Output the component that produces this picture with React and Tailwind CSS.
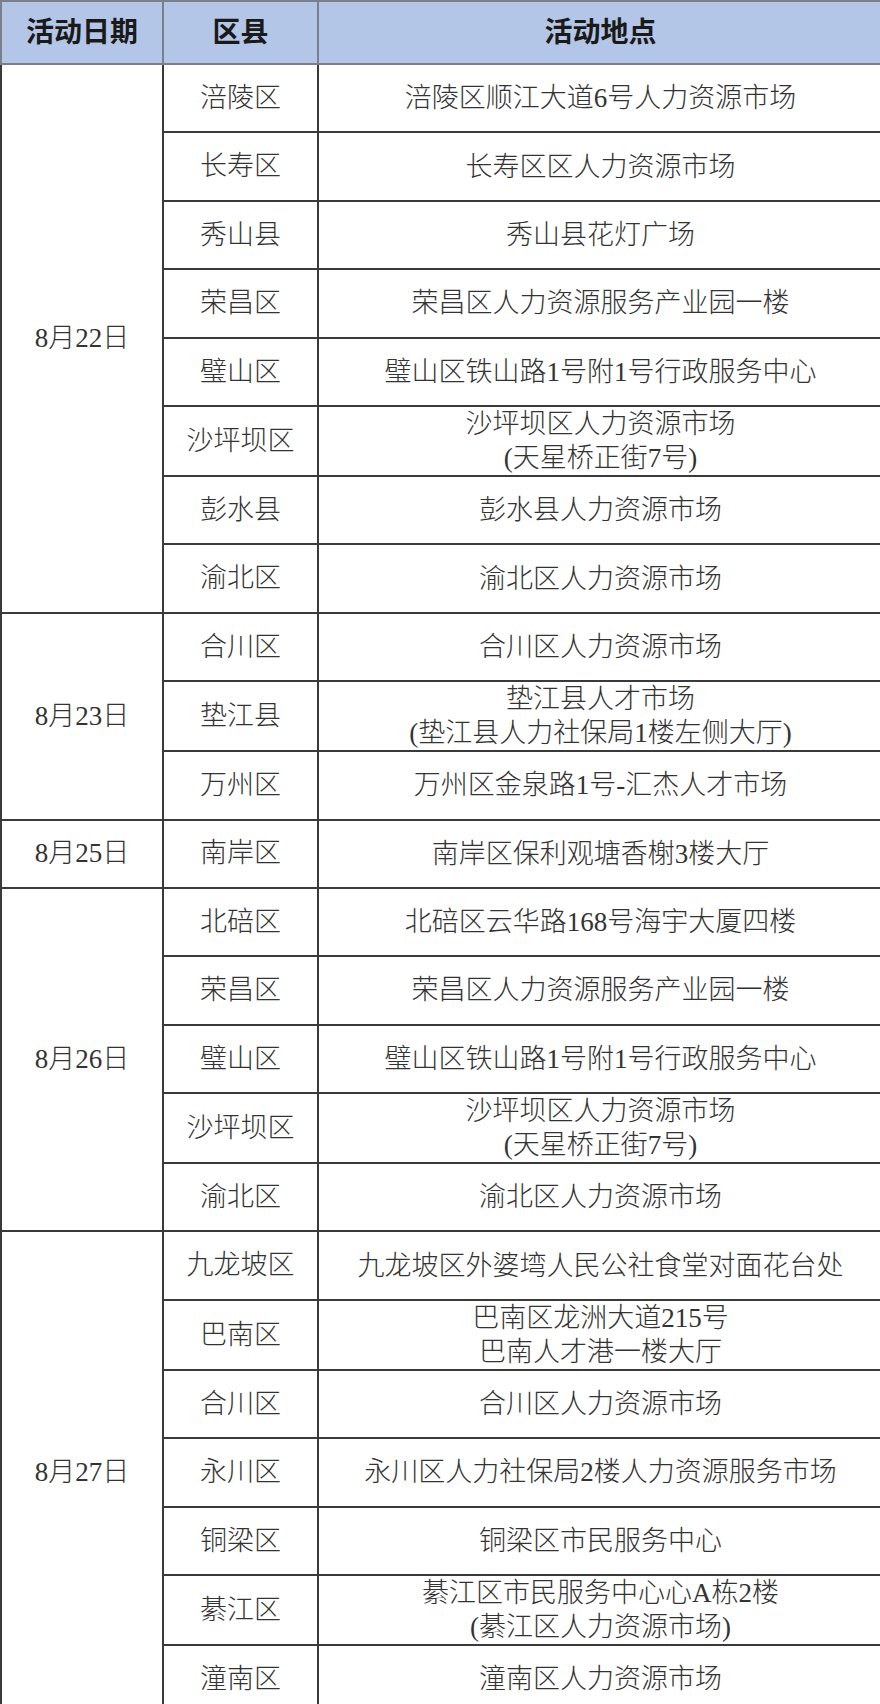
import React from "react";

const groups = [
  {
    date: "8月22日",
    rows: [
      ["涪陵区", ["涪陵区顺江大道6号人力资源市场"]],
      ["长寿区", ["长寿区区人力资源市场"]],
      ["秀山县", ["秀山县花灯广场"]],
      ["荣昌区", ["荣昌区人力资源服务产业园一楼"]],
      ["璧山区", ["璧山区铁山路1号附1号行政服务中心"]],
      ["沙坪坝区", ["沙坪坝区人力资源市场", "(天星桥正街7号)"]],
      ["彭水县", ["彭水县人力资源市场"]],
      ["渝北区", ["渝北区人力资源市场"]],
    ],
  },
  {
    date: "8月23日",
    rows: [
      ["合川区", ["合川区人力资源市场"]],
      ["垫江县", ["垫江县人才市场", "(垫江县人力社保局1楼左侧大厅)"]],
      ["万州区", ["万州区金泉路1号-汇杰人才市场"]],
    ],
  },
  {
    date: "8月25日",
    rows: [["南岸区", ["南岸区保利观塘香榭3楼大厅"]]],
  },
  {
    date: "8月26日",
    rows: [
      ["北碚区", ["北碚区云华路168号海宇大厦四楼"]],
      ["荣昌区", ["荣昌区人力资源服务产业园一楼"]],
      ["璧山区", ["璧山区铁山路1号附1号行政服务中心"]],
      ["沙坪坝区", ["沙坪坝区人力资源市场", "(天星桥正街7号)"]],
      ["渝北区", ["渝北区人力资源市场"]],
    ],
  },
  {
    date: "8月27日",
    rows: [
      ["九龙坡区", ["九龙坡区外婆塆人民公社食堂对面花台处"]],
      ["巴南区", ["巴南区龙洲大道215号", "巴南人才港一楼大厅"]],
      ["合川区", ["合川区人力资源市场"]],
      ["永川区", ["永川区人力社保局2楼人力资源服务市场"]],
      ["铜梁区", ["铜梁区市民服务中心"]],
      ["綦江区", ["綦江区市民服务中心心A栋2楼", "(綦江区人力资源市场)"]],
      ["潼南区", ["潼南区人力资源市场"]],
    ],
  },
];

const font = { fontFamily: '"Liberation Serif", "Noto Sans CJK SC", serif' };

export default function App() {
  return (
    <div className="w-[880px] overflow-hidden bg-white" style={font}>
      <table className="w-[882px] table-fixed border-collapse text-center text-[#333]">
        <colgroup>
          <col className="w-[162px]" />
          <col className="w-[155px]" />
          <col className="w-[565px]" />
        </colgroup>
        <thead>
          <tr className="h-[63px] bg-[#b4c6e7] text-[28px] font-semibold text-[#1a1a1a]">
            <th className="border-2 border-[#7a7f8a]">活动日期</th>
            <th className="border-2 border-[#7a7f8a]">区县</th>
            <th className="border-2 border-[#7a7f8a]">活动地点</th>
          </tr>
        </thead>
        <tbody className="text-[27px] font-light">
          {groups.map((g) =>
            g.rows.map(([area, place], i) => (
              <tr key={g.date + i} className="h-[68.4px]">
                {i === 0 && (
                  <td rowSpan={g.rows.length} className="border-2 border-[#3a3a3a]">
                    {g.date}
                  </td>
                )}
                <td className="border-2 border-[#3a3a3a]">{area}</td>
                <td className="border-2 border-[#3a3a3a] leading-[34px]">
                  {place.map((p) => (
                    <div key={p}>{p}</div>
                  ))}
                </td>
              </tr>
            ))
          )}
        </tbody>
      </table>
    </div>
  );
}
